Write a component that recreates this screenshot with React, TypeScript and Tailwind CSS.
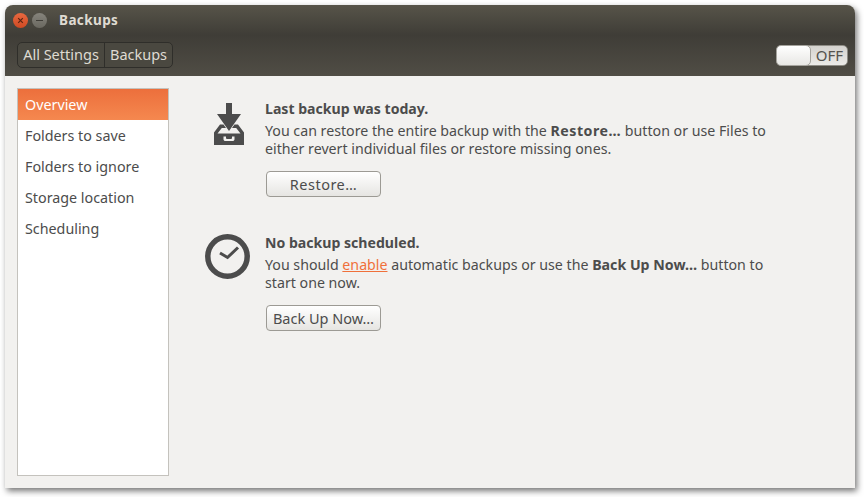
export default function App() {
  const items = ["Folders to save", "Folders to ignore", "Storage location", "Scheduling"];
  return (
    <div className="w-[864px] h-[497px] bg-white pl-[5px] pt-[5px] font-['Noto_Sans',sans-serif] text-[#4c4c4c] overflow-hidden">
      <div className="w-[850px] h-[483px] flex flex-col rounded-t-[8px] bg-[#f2f1ef] shadow-[2px_3px_6px_rgba(0,0,0,0.55)]">
        <div className="h-[30px] shrink-0 rounded-t-[8px] bg-gradient-to-b from-[#575449] to-[#3f3d37] flex items-center pl-[8px]">
          <div className="w-[15px] h-[15px] rounded-full bg-gradient-to-b from-[#e8683f] to-[#cf4a23] flex items-center justify-center">
            <svg width="7" height="7" viewBox="0 0 7 7"><path d="M1.2 1.2 5.8 5.8M5.8 1.2 1.2 5.8" stroke="#5a2412" strokeWidth="1.2" /></svg>
          </div>
          <div className="w-[15px] h-[15px] ml-[4px] rounded-full bg-gradient-to-b from-[#86847c] to-[#6a6860] flex items-center justify-center">
            <div className="w-[7px] h-[1px] bg-[#3f3d37]" />
          </div>
          <span className="ml-[12px] pt-[2px] text-[13.5px] font-bold text-[#dfdbd2] tracking-[0.4px] leading-none">Backups</span>
        </div>
        <div className="h-[41px] shrink-0 bg-gradient-to-b from-[#3f3d37] to-[#504d45] flex items-center justify-between pl-[12px] pr-[7px]">
          <div className="flex h-[26px] -mt-[1px] rounded-[5px] border border-[#2f2e2a] bg-[#4a4840] text-[14.5px] text-[#dfdbd2] leading-none">
            <div className="w-[87px] pb-[2px] flex items-center justify-center border-r border-[#2f2e2a]">All Settings</div>
            <div className="w-[67px] pb-[2px] flex items-center justify-center">Backups</div>
          </div>
          <div className="relative w-[72px] h-[21px] -mt-[1px] rounded-[5px] border border-[#8f8d86] bg-gradient-to-b from-[#d4d2ce] to-[#ecebe8] flex items-center justify-end pr-[4px] text-[15px] leading-none text-[#55534e]">
            OFF
            <div className="absolute left-[-1px] top-[-1px] w-[35px] h-[21px] rounded-[5px] border border-[#a5a39d] bg-gradient-to-b from-[#ffffff] to-[#e8e7e4]" />
          </div>
        </div>
        <div className="flex-1 flex p-[12px] min-h-0">
          <div className="w-[152px] h-[388px] shrink-0 border border-[#c4c2bd] bg-white text-[14.3px] leading-none">
            <div className="h-[31px] pt-[2px] flex items-center pl-[7px] text-white bg-gradient-to-b from-[#ec6f3c] to-[#f5884f]">Overview</div>
            {items.map((t) => (
              <div key={t} className="h-[31px] pt-[2px] flex items-center pl-[7px]">{t}</div>
            ))}
          </div>
          <div className="flex-1 flex flex-col pl-[35px] pt-[10px] gap-[35px]">
            <div className="flex">
              <div className="w-[61px] shrink-0 pt-[5px] pl-[10px]">
                <svg width="30" height="42" viewBox="0 0 30 42" className="block">
                  <path d="M12 0h6v11h9L15 28 3 11h9z" fill="#4c4c4c" />
                  <path d="M6 21.5h3.5l2.5 3.5H7.8L3.5 30.5h23L22.2 25H18l2.5-3.5H24l6 8V42H0V29.5z" fill="#4c4c4c" />
                  <path d="M9.5 33.5h2.5v1.5c0 .6.4.9 1 .9h4c.6 0 1-.3 1-.9v-1.5h2.5v2.7c0 1.1-.8 1.8-2 1.8h-7c-1.2 0-2-.7-2-1.8z" fill="#f2f1ef" />
                </svg>
              </div>
              <div className="text-[14.2px] leading-[18px]">
                <div className="font-bold text-[14.1px] leading-[20px] pt-[1px] mb-[3px]">Last backup was today.</div>
                <div className="w-[520px]">You can restore the entire backup with the <b className="tracking-[0.5px]">Restore…</b> button or use Files to<br />either revert individual files or restore missing ones.</div>
                <button className="mt-[13px] ml-[1px] w-[115px] h-[26px] rounded-[4px] border border-[#9c9a94] bg-gradient-to-b from-white to-[#e6e5e2] text-[14.5px] tracking-[0.5px] flex items-center justify-center">Restore…</button>
              </div>
            </div>
            <div className="flex">
              <div className="w-[61px] shrink-0 pt-[2px] pl-[1px]">
                <svg width="45" height="45" viewBox="0 0 45 45" className="block">
                  <circle cx="22.5" cy="22.5" r="19.7" fill="none" stroke="#4c4c4c" strokeWidth="5.5" />
                  <path d="M15 19l7.5 4.5L33 13.5" fill="none" stroke="#4c4c4c" strokeWidth="3" />
                </svg>
              </div>
              <div className="text-[14.2px] leading-[18px]">
                <div className="font-bold text-[14.1px] leading-[20px] pt-[1px] mb-[3px]">No backup scheduled.</div>
                <div className="w-[520px]">You should <span className="text-[#f0703a] underline">enable</span> automatic backups or use the <b>Back Up Now…</b> button to<br />start one now.</div>
                <button className="mt-[13px] ml-[1px] w-[115px] h-[26px] rounded-[4px] border border-[#9c9a94] bg-gradient-to-b from-white to-[#e6e5e2] text-[14.5px] flex items-center justify-center">Back Up Now…</button>
              </div>
            </div>
          </div>
        </div>
      </div>
    </div>
  );
}
